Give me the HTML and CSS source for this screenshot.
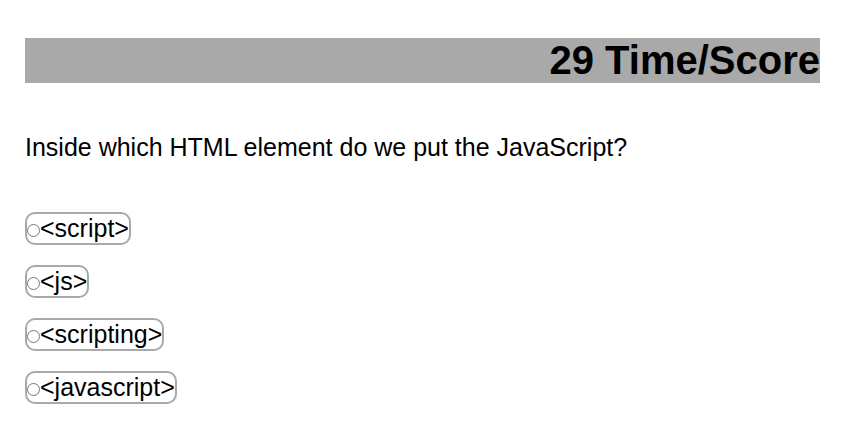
FILE: index.html
```html
<!DOCTYPE html>
<html lang="en">
<head>
<meta charset="utf-8">
<title>Quiz</title>
<link rel="stylesheet" href="styles.css">
</head>
<body>
<h1 class="score">29 Time/Score</h1>
<form class="quiz">
<p class="question" id="question">Inside which HTML element do we put the JavaScript?</p>
<div class="options" role="radiogroup" aria-labelledby="question">
<label class="option"><input class="radio" type="radio" name="answer">&lt;script&gt;</label>
<label class="option"><input class="radio" type="radio" name="answer">&lt;js&gt;</label>
<label class="option"><input class="radio" type="radio" name="answer">&lt;scripting&gt;</label>
<label class="option"><input class="radio" type="radio" name="answer">&lt;javascript&gt;</label>
</div>
</form>
</body>
</html>
```
FILE: styles.css
```css
body {
  margin: 38px 24px 20px 25px;
  font-family: "Liberation Sans", Arial, sans-serif;
  font-size: 25px;
  line-height: 29px;
  color: #000;
  background: #fff;
}

.score {
  margin: 0;
  background: darkgray;
  font-size: 40px;
  line-height: 45px;
  text-align: right;
}

.question {
  margin: 50px 0;
}

.options {
  display: flex;
  flex-direction: column;
  align-items: flex-start;
  gap: 20px;
}

.option {
  display: flex;
  align-items: center;
  border: 2px solid darkgray;
  border-radius: 10px;
}

.radio {
  appearance: none;
  width: 13px;
  height: 13px;
  margin: 4px 0 0;
  border: 1px solid #767676;
  border-radius: 50%;
  background: #fff;
}
```
